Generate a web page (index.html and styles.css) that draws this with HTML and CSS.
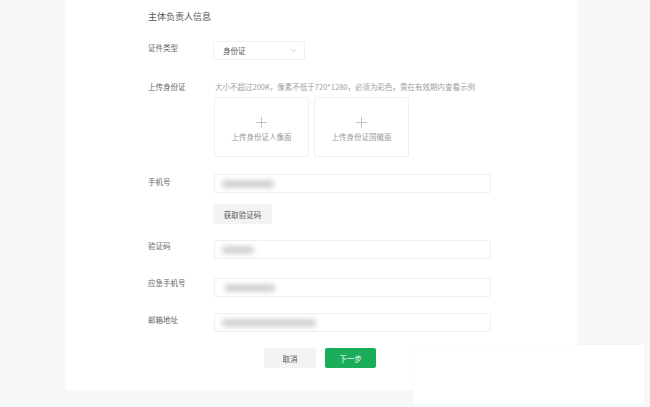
FILE: index.html
```html
<!DOCTYPE html>
<html lang="zh">
<head>
<meta charset="utf-8">
<link rel="stylesheet" href="styles.css">
</head>
<body>
<div class="page">
  <div class="card">
    <div class="title">主体负责人信息</div>

    <div class="row row-select">
      <div class="label">证件类型</div>
      <div class="select">
        <span>身份证</span>
        <svg class="chev" width="7" height="5" viewBox="0 0 7 5"><path d="M1 1.2 L3.5 3.6 L6 1.2" fill="none" stroke="#c8c8c8" stroke-width="0.8"/></svg>
      </div>
    </div>

    <div class="row row-upload">
      <div class="label">上传身份证</div>
      <div class="upload-col">
        <div class="hint">大小不超过200K，像素不低于720*1280，必须为彩色，需在有效期内查看示例</div>
        <div class="boxes">
          <div class="box">
            <svg width="11" height="11" viewBox="0 0 11 11"><path d="M5.5 0 V11 M0 5.5 H11" stroke="#b5b5b5" stroke-width="0.8"/></svg>
            <span>上传身份证人像面</span>
          </div>
          <div class="box">
            <svg width="11" height="11" viewBox="0 0 11 11"><path d="M5.5 0 V11 M0 5.5 H11" stroke="#b5b5b5" stroke-width="0.8"/></svg>
            <span>上传身份证国徽面</span>
          </div>
        </div>
      </div>
    </div>

    <div class="row row-phone">
      <div class="label">手机号</div>
      <div class="input"><i class="blur" style="width:52px"></i></div>
    </div>

    <div class="row row-code-btn">
      <div class="label"></div>
      <button class="btn gray code">获取验证码</button>
    </div>

    <div class="row row-code">
      <div class="label">验证码</div>
      <div class="input"><i class="blur" style="width:32px"></i></div>
    </div>

    <div class="row row-emergency">
      <div class="label">应急手机号</div>
      <div class="input"><i class="blur" style="width:50px;margin-left:3px"></i></div>
    </div>

    <div class="row row-email">
      <div class="label">邮箱地址</div>
      <div class="input"><i class="blur" style="width:94px"></i></div>
    </div>

    <div class="actions">
      <button class="btn gray cancel">取消</button>
      <button class="btn green">下一步</button>
    </div>
  </div>
  <div class="corner"></div>
</div>
</body>
</html>
```

FILE: styles.css
```css
* { box-sizing: border-box; }
html, body { margin: 0; padding: 0; }
body {
  width: 650px;
  height: 407px;
  overflow: hidden;
  background: #f7f8fa;
  font-family: "Noto Sans CJK SC", "Noto Sans", sans-serif;
  color: #666;
}
.page {
  position: relative;
  width: 650px;
  height: 407px;
  padding-left: 65px;
}
.card {
  width: 512px;
  height: 390px;
  background: #fff;
  padding: 10px 0 0 83px;
  display: flex;
  flex-direction: column;
}
.title {
  font-size: 9px;
  line-height: 14px;
  height: 14px;
  color: #555;
}
.row {
  display: flex;
  align-items: flex-start;
}
.label {
  width: 66px;
  flex: none;
  font-size: 7.5px;
  line-height: 14px;
  color: #666;
}
.row-select { margin-top: 17px; }
.select {
  width: 92px;
  height: 19px;
  margin-left: -1px;
  border: 1px solid #f0f0f0;
  border-radius: 2px;
  display: flex;
  align-items: center;
  justify-content: space-between;
  padding: 0 7px 0 9px;
  font-size: 7.5px;
  color: #555;
}
.row-upload { margin-top: 21px; }
.row-upload .label { line-height: 12px; }
.upload-col { display: flex; flex-direction: column; }
.hint {
  font-size: 7.5px;
  line-height: 12px;
  color: #a0a0a0;
  margin-left: 1px;
  white-space: nowrap;
}
.boxes {
  display: flex;
  gap: 5px;
  margin-top: 4px;
}
.box {
  width: 95px;
  height: 60px;
  border: 1px solid #f0f0f0;
  border-radius: 2px;
  display: flex;
  flex-direction: column;
  align-items: center;
  padding-top: 19px;
}
.box span {
  margin-top: 4px;
  font-size: 7.5px;
  line-height: 10px;
  color: #999;
}
.input {
  width: 277px;
  height: 19px;
  border: 1px solid #efefef;
  border-radius: 2px;
  display: flex;
  align-items: center;
  padding-left: 7px;
}
.blur {
  display: block;
  height: 8px;
  background: #d2d2d2;
  border-radius: 4px;
  filter: blur(2.5px);
}
.row-phone { margin-top: 17px; }
.row-phone .label { padding-top: 1px; }
.row-code-btn { margin-top: 11px; }
.row-code { margin-top: 16px; }
.row-code .label { margin-top: -1px; }
.row-emergency { margin-top: 19px; }
.row-emergency .label { margin-top: -2px; }
.row-email { margin-top: 16px; }
.btn {
  border: none;
  height: 20px;
  border-radius: 2px;
  font-family: inherit;
  font-size: 7.5px;
  padding: 0;
  display: flex;
  align-items: center;
  justify-content: center;
}
.gray { background: #f3f3f3; color: #555; }
.code { width: 59px; margin-left: -1px; }
.actions {
  margin-top: 16px;
  margin-left: -83px;
  display: flex;
  gap: 9px;
  padding-left: 199px;
}
.cancel { width: 52px; }
.green { width: 51px; background: #1aad5a; color: #fff; }
.corner {
  position: absolute;
  left: 413px;
  top: 345px;
  width: 231px;
  height: 59px;
  background: #fff;
  box-shadow: 0 0 2px rgba(0,0,0,0.04);
}
```
